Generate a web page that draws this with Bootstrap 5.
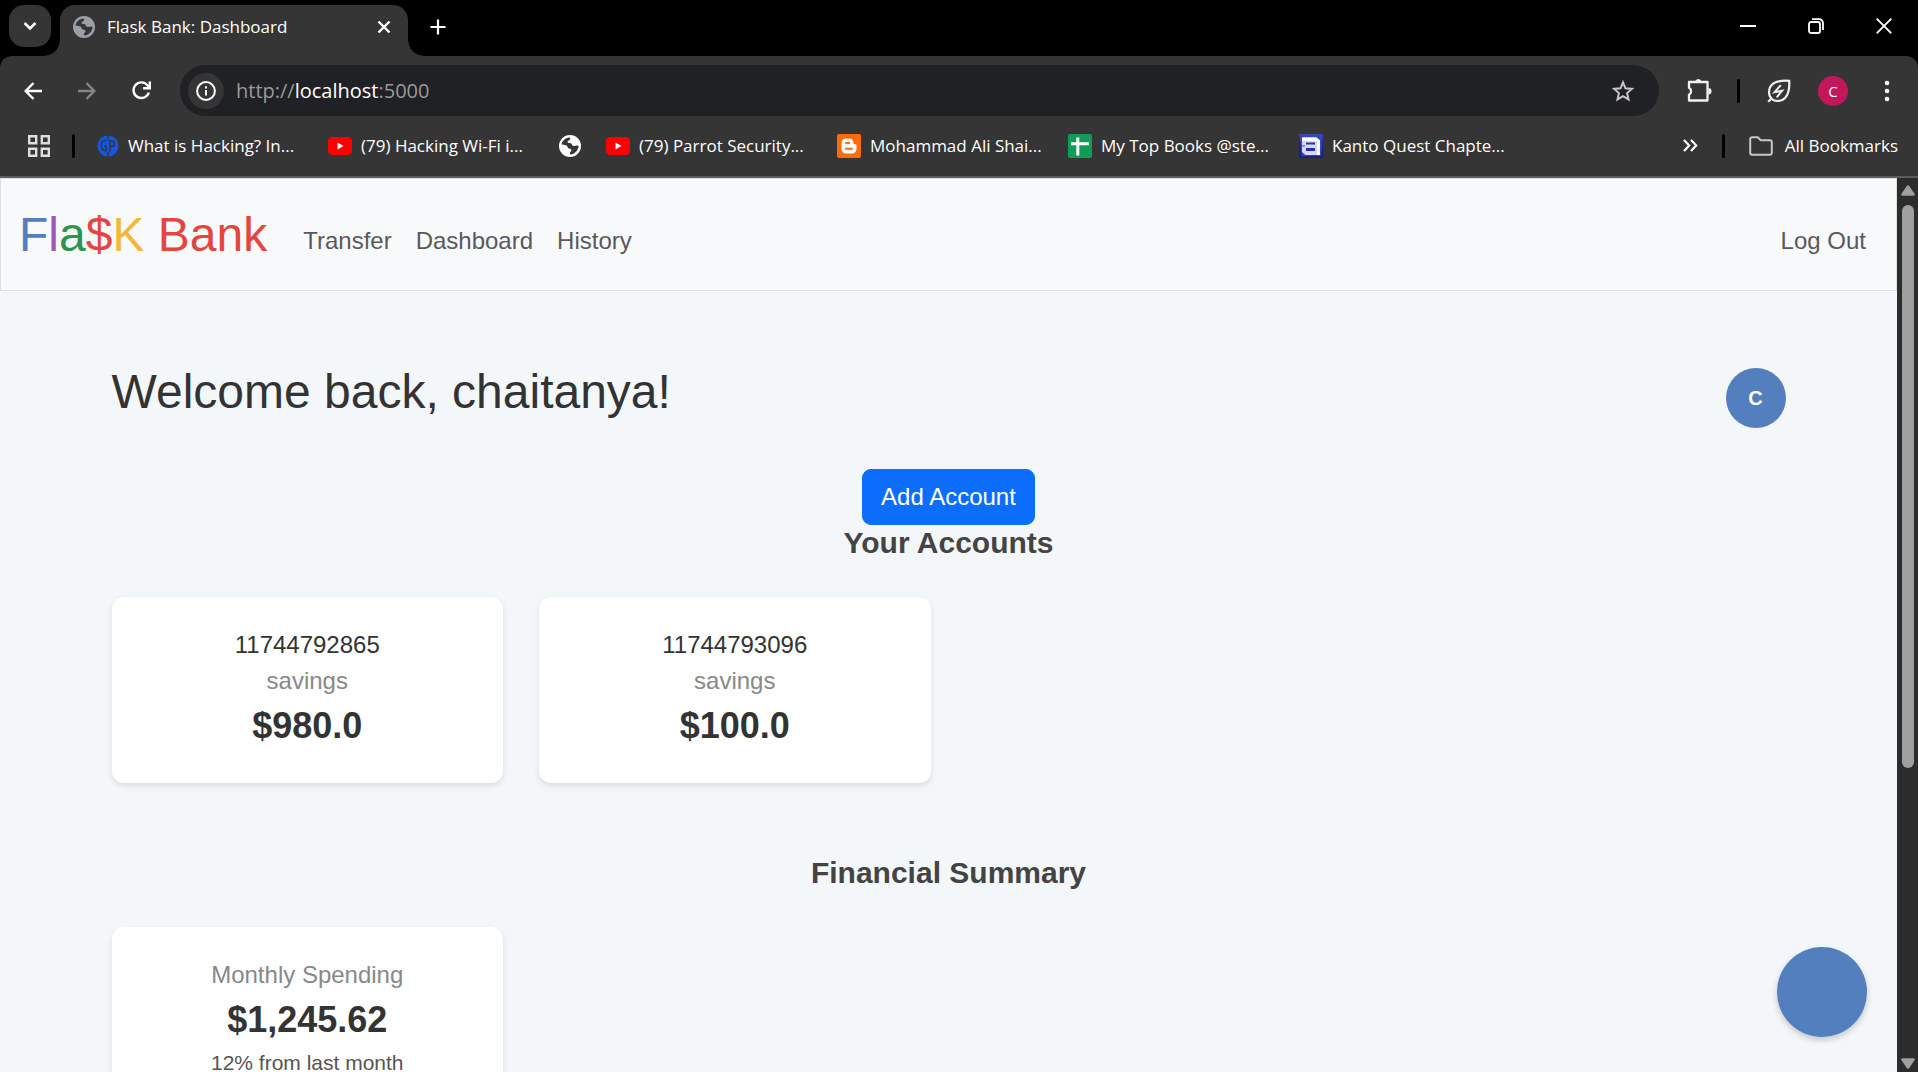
<!DOCTYPE html>
<html lang="en">
<head>
<meta charset="utf-8">
<meta name="viewport" content="width=device-width, initial-scale=1">
<title>Flask Bank: Dashboard</title>
<link href="https://cdn.jsdelivr.net/npm/bootstrap@5.3.0/dist/css/bootstrap.min.css" rel="stylesheet">
<style>
  html { font-size: 24px; }
  body { font-family: "Liberation Sans", Arial, sans-serif; color: #333; background: #000; }

  /* browser frame */
  .frame-ui { font-family: "Open Sans", "Noto Sans", sans-serif; font-size: 17px; line-height: 24px; color: #fff; background: #000; }
  .frame-ui button, .frame-ui a { color: inherit; font: inherit; background: none; border: 0; padding: 0; text-decoration: none; }
  .frame-ui svg, .frame-ui button { display: flex; flex: none; align-items: center; justify-content: center; }
  .tab-strip { height: 56px; background: #000; padding-left: 9px; }
  .tab-strip .tab-search { width: 42px; height: 42px; margin: 5px 9px 0 0; border-radius: 15px; background: #353535; }
  .open-tab { position: relative; align-self: flex-end; width: 348px; height: 51px; padding: 0 17px 8px 13px; border-radius: 15px 15px 0 0; background: #353535; }
  .open-tab::before, .open-tab::after { content: ""; position: absolute; bottom: 0; width: 15px; height: 15px; }
  .open-tab::before { left: -15px; background: radial-gradient(circle at 0 0, transparent 14px, #353535 15px); }
  .open-tab::after { right: -15px; background: radial-gradient(circle at 100% 0, transparent 14px, #353535 15px); }
  .tab-strip .strip-btn { width: 60px; height: 42px; }
  .tab-strip .window-btn { width: 68px; height: 51px; }
  .tool-row { height: 69px; padding: 0 4px 0 6px; border-radius: 12px 12px 0 0; background: #353535; }
  .tool-row .tool-btn { width: 54px; height: 51px; }
  .address-pill { height: 51px; margin: 0 13px 0 12px; padding: 0 18px 0 8px; border-radius: 26px; background: #202124; font-size: 20px; }
  .address-pill .site-info { width: 36px; height: 36px; margin-right: 12px; border-radius: 50%; background: #353535; }
  .address-pill .dim { color: #999; }
  .bar-split { width: 3px; height: 24px; border-radius: 2px; background: #000; flex: none; }
  .tool-row .bar-split { margin: 0 12px 0 11px; }
  .mark-row .bar-split { margin: 0 22px; }
  .mark-row .bar-split-end { margin: 0 24px; }
  .profile-dot { width: 30px; height: 30px; border-radius: 50%; background: #c2185b; font-size: 15px; }
  .mark-row { height: 53px; padding: 0 20px 10px 28px; border-bottom: 2px solid #5c5c5c; background: #353535; }
  .mark-row .mark-link { display: flex; align-items: center; gap: 9px; width: 231px; white-space: nowrap; }
  .mark-row .mark-solo { width: 47px; }

  /* page */
  .page-view { background: #f3f7fa; min-height: 0; }
  .bank-nav { background: #f8f9fa; border: 1px solid #dde1e6; }
  .bank-nav .navbar-brand { font-size: 48px; color: #e34640; }
  .bank-nav .nav-link { color: #58595b; }
  .c-blue { color: #537fbe; } .c-purple { color: #9d5ab5; } .c-green { color: #2e934c; } .c-red { color: #e34640; } .c-yellow { color: #f4b73b; }
  .dash { max-width: 1710px; padding-top: 72px; }
  .dash h1 { font-size: 48px; font-weight: 400; margin-bottom: 12px; }
  .dash h2 { font-size: 30px; font-weight: 700; color: #444; margin-bottom: 36px; }
  .user-dot { width: 60px; height: 60px; border-radius: 50%; background: #537fbe; font-size: 20px; }
  .tiles { display: grid; grid-template-columns: repeat(4, 1fr); gap: 36px; margin-bottom: 72px; }
  .tile { background: #fff; border-radius: 12px; padding: 30px; text-align: center; box-shadow: 0 3px 6px rgba(0,0,0,.1); }
  .tile p { margin: 0; }
  .tile .soft { color: #888; }
  .tile .amount { font-size: 36px; font-weight: 700; }
  .tile .note { font-size: 21px; color: #555; }
  .chat-fab { position: absolute; right: 30px; bottom: 35px; width: 90px; height: 90px; border: 0; border-radius: 50%; background: #537fbe; box-shadow: 0 3px 6px rgba(0,0,0,.2); }
  .scroll-rail { width: 21px; padding: 7px 0 3px; background: #2c2c2c; }
  .scroll-lane { padding-top: 9px; }
  .scroll-grip { width: 12px; height: 66%; border-radius: 6px; background: #9f9f9f; }
</style>
<script src="https://cdn.jsdelivr.net/npm/bootstrap@5.3.0/dist/js/bootstrap.bundle.min.js"></script>
</head>
<body class="d-flex flex-column vh-100 overflow-hidden">

<svg width="0" height="0" class="d-none" aria-hidden="true">
  <symbol id="globe" viewBox="0 0 22 22">
    <circle cx="11" cy="11" r="11" fill="currentColor"/>
    <path d="M2.500 9.500C3.200 5.500 6.500 2.700 10.500 2.400c1.200.6 1 2-.4 2.800-1.300.7-2 1.400-1.300 2.300.8.8 2 .2 3 .7 1.300.7.900 2 2.200 2.600 1.400.6 2.600-.2 3.900-.2 1 .1 1.600.4 1.700.7-.5 4.300-3.800 7.800-8.100 8.300-1.300-1-.6-2.300.4-3 .8-.7.8-1.700 0-2.300-.9-.7-2-.4-2.900-1.200-.6-.6-.3-1.600-1.100-2.300C6.400 9.800 4.300 10.300 2.500 9.500z" fill="#353535"/>
  </symbol>
  <symbol id="youtube" viewBox="0 0 24 24">
    <rect y="3" width="24" height="18" rx="4.500" fill="#f00"/><path d="M9.500 8.500v7l6-3.500z" fill="#fff"/>
  </symbol>
</svg>

<header class="frame-ui flex-shrink-0">
  <div class="tab-strip d-flex">
    <button class="tab-search" aria-label="Search tabs"><svg width="14" height="10" viewBox="0 0 14 10" fill="none" stroke="#fff" stroke-width="2.500"><path d="M1.500 2L7 7.500 12.500 2"/></svg></button>
    <div class="open-tab d-flex align-items-center">
      <svg width="22" height="22" color="#9aa0a6"><use href="#globe"/></svg>
      <span class="flex-grow-1 ms-2">Flask Bank: Dashboard</span>
      <button aria-label="Close tab"><svg width="14" height="14" viewBox="0 0 14 14" stroke="#fff" stroke-width="2.400"><path d="M1.500 1.500l11 11M12.500 1.500l-11 11"/></svg></button>
    </div>
    <button class="strip-btn mt-1" aria-label="New tab"><svg width="16" height="16" viewBox="0 0 16 16" stroke="#fff" stroke-width="2.200"><path d="M8 .5v15M.5 8h15"/></svg></button>
    <div class="d-flex ms-auto">
      <button class="window-btn" aria-label="Minimize"><svg width="16" height="16" viewBox="0 0 16 16" stroke="#fff" stroke-width="2"><path d="M0 8h16"/></svg></button>
      <button class="window-btn" aria-label="Restore"><svg width="16" height="16" viewBox="0 0 16 16" fill="none" stroke="#fff" stroke-width="1.800"><rect x="1" y="4" width="11" height="11" rx="2"/><path d="M4 1.200h7a4 4 0 0 1 4 4V12"/></svg></button>
      <button class="window-btn" aria-label="Close"><svg width="16" height="16" viewBox="0 0 16 16" stroke="#fff" stroke-width="1.800"><path d="M.7.7l14.600 14.600M15.300.7L.7 15.300"/></svg></button>
    </div>
  </div>

  <div class="tool-row d-flex align-items-center">
    <button class="tool-btn" aria-label="Back"><svg width="18" height="18" viewBox="0 0 18 18" fill="none" stroke="#fff" stroke-width="2.400"><path d="M9.500 1L1.700 9l7.800 8M1.700 9H18"/></svg></button>
    <button class="tool-btn" aria-label="Forward"><svg width="18" height="18" viewBox="0 0 18 18" fill="none" stroke="#858585" stroke-width="2.400"><path d="M8.500 1l7.800 8-7.800 8M16.300 9H0"/></svg></button>
    <button class="tool-btn" aria-label="Reload"><svg width="19" height="19" viewBox="0 0 19 19" fill="none" stroke="#fff" stroke-width="2.400"><path d="M16.800 11.500A7.800 7.800 0 1 1 15.400 4.300L17 6"/><path d="M17.800.5v6.700h-6.700"/></svg></button>
    <div class="address-pill d-flex align-items-center flex-grow-1">
      <button class="site-info" aria-label="Site information"><svg width="20" height="20" viewBox="0 0 20 20" fill="none" stroke="#fff" stroke-width="2"><circle cx="10" cy="10" r="8.900"/><path d="M10 9v5.500M10 5.200v2.200"/></svg></button>
      <div class="flex-grow-1" role="textbox" aria-label="Address" contenteditable="true" spellcheck="false"><span class="dim">http://</span>localhost<span class="dim">:5000</span></div>
      <button class="px-1" aria-label="Bookmark this page"><svg width="24" height="24" viewBox="0 0 24 24" fill="none" stroke="#c7c7c7" stroke-width="2"><path d="M12 3.400l2.500 5.900 6.400.6-4.800 4.200 1.400 6.300-5.500-3.300-5.500 3.300 1.400-6.300-4.800-4.200 6.400-.6z"/></svg></button>
    </div>
    <button class="tool-btn" aria-label="Extensions"><svg width="26" height="26" viewBox="0 0 26 26"><path d="M3 4h18.500v18.500H3v-5.800a4 4 0 0 0 0-7z" fill="none" stroke="#f1f1f1" stroke-width="2.300" stroke-linejoin="round"/><path d="M9 3.500a3.400 3.400 0 0 1 6.600 0zM22.300 10a3.200 3.200 0 0 1 0 6.400z" fill="#f1f1f1"/></svg></button>
    <span class="bar-split"></span>
    <button class="tool-btn" aria-label="Energy saver"><svg width="24" height="24" viewBox="0 0 24 24" fill="none" stroke="#f1f1f1" stroke-width="2.200"><path d="M22.200 1.800C13 1 2 3 2 13c0 6 4 9 8.500 9C19 22 23 14 22.200 1.800zM1.200 22.800L5 19"/><path d="M13.800 6.200L7.500 13.300l7.600-1.500-5.400 6.500" stroke-width="2"/></svg></button>
    <button class="tool-btn" aria-label="Profile"><span class="profile-dot d-flex align-items-center justify-content-center">C</span></button>
    <button class="tool-btn" aria-label="Menu"><svg width="6" height="22" viewBox="0 0 6 22" fill="#fff"><circle cx="3" cy="3" r="2.300"/><circle cx="3" cy="11" r="2.300"/><circle cx="3" cy="19" r="2.300"/></svg></button>
  </div>

  <nav class="mark-row d-flex align-items-center" aria-label="Bookmarks">
    <button aria-label="Tab groups"><svg width="22" height="22" viewBox="0 0 22 22" fill="none" stroke="#dedede" stroke-width="2.400"><path d="M1.200 1.200h7v7h-7zM13.800 1.200h7v7h-7zM1.200 13.800h7v7h-7zM13.800 13.800h7v7h-7z"/></svg></button>
    <span class="bar-split"></span>
    <a class="mark-link" href="#"><svg width="22" height="22" viewBox="0 0 22 22"><circle cx="11" cy="11" r="10.500" fill="#1456e0"/><path d="M11 0v5M11 17v5M9 5.500C5.500 5 4 8 4.200 11c.2 3 2 5 4.800 4.800V11H7M13 16.500V5.800c3 0 4.500 1.700 4.500 3.200S16 11.500 13.500 11.500" stroke="#353535" stroke-width="1.400" fill="none"/></svg>What is Hacking? In...</a>
    <a class="mark-link" href="#"><svg width="24" height="24"><use href="#youtube"/></svg>(79) Hacking Wi-Fi i...</a>
    <a class="mark-link mark-solo" href="#" aria-label="Saved page"><svg width="22" height="22"><use href="#globe"/></svg></a>
    <a class="mark-link" href="#"><svg width="24" height="24"><use href="#youtube"/></svg>(79) Parrot Security...</a>
    <a class="mark-link" href="#"><svg width="24" height="24" viewBox="0 0 24 24"><rect width="24" height="24" rx="2" fill="#ff6a0a"/><path d="M4.500 9a4.500 4.500 0 0 1 4.500-4.500h3.200A4.300 4.300 0 0 1 16.500 8.800c0 1 .5 1.200 1.500 1.300 1 .1 1.500.6 1.500 1.500V15a4.500 4.500 0 0 1-4.500 4.500H9A4.500 4.500 0 0 1 4.500 15z" fill="#fff"/><path d="M9 9h3.300M9 14.700h6" stroke="#ff6a0a" stroke-width="2" stroke-linecap="round"/></svg>Mohammad Ali Shai...</a>
    <a class="mark-link" href="#"><svg width="24" height="24" viewBox="0 0 24 24"><rect width="24" height="24" rx="2" fill="#109d58"/><path d="M9.800 3.500v18M3 9.800h18" stroke="#fff" stroke-width="3"/></svg>My Top Books @ste...</a>
    <a class="mark-link" href="#"><svg width="24" height="24" viewBox="0 0 24 24"><path d="M0 0h24v24H0z" fill="#18208a"/><path d="M0 0h24l-2 22H3z" fill="#3547b8"/><path d="M3 3.500h14.500l3.500 3V21H6.500L3 18v-5.500h3v-1H3z" fill="#d3d9f5"/><path d="M3 3.500h14.500l3.500 3V21h-3V7H3z" fill="#fff"/><path d="M7 8.500h9v2H7zM7 14h9v3H7z" fill="#2534a3"/></svg>Kanto Quest Chapte...</a>
    <button class="ms-auto" aria-label="More bookmarks"><svg width="15" height="13" viewBox="0 0 15 13" fill="none" stroke="#fff" stroke-width="2.200"><path d="M1 1l5.200 5.500L1 12M8 1l5.200 5.500L8 12"/></svg></button>
    <span class="bar-split bar-split-end"></span>
    <a class="d-flex align-items-center" href="#"><svg class="me-2" width="24" height="20" viewBox="0 0 24 20" fill="none" stroke="#c7c7c7" stroke-width="2"><path d="M1.200 3.200a2 2 0 0 1 2-2h5.500l3 3h9.100a2 2 0 0 1 2 2v10.600a2 2 0 0 1-2 2H3.200a2 2 0 0 1-2-2z"/></svg>All Bookmarks</a>
  </nav>
</header>

<div class="d-flex flex-grow-1 overflow-hidden">
  <div class="page-view position-relative flex-grow-1 overflow-hidden">
    <nav class="navbar navbar-expand-md bank-nav">
      <div class="container-fluid">
        <a class="navbar-brand" href="#"><span class="c-blue">F</span><span class="c-purple">l</span><span class="c-green">a</span><span class="c-red">$</span><span class="c-yellow">K</span> <span class="c-red">Bank</span></a>
        <div class="collapse navbar-collapse">
          <ul class="navbar-nav me-auto mt-2">
            <li class="nav-item"><a class="nav-link" href="#">Transfer</a></li>
            <li class="nav-item"><a class="nav-link" href="#">Dashboard</a></li>
            <li class="nav-item"><a class="nav-link" href="#">History</a></li>
          </ul>
          <ul class="navbar-nav ms-auto mt-2">
            <li class="nav-item"><a class="nav-link" href="#">Log Out</a></li>
          </ul>
        </div>
      </div>
    </nav>

    <main class="container dash">
      <div class="d-flex justify-content-between align-items-center mb-4">
        <h1>Welcome back, chaitanya!</h1>
        <div class="user-dot d-flex align-items-center justify-content-center fw-bold text-white">C</div>
      </div>
      <div class="d-flex justify-content-center">
        <button class="btn btn-primary">Add Account</button>
      </div>
      <section>
        <h2 class="text-center">Your Accounts</h2>
        <div class="tiles">
          <div class="tile"><p>11744792865</p><p class="soft">savings</p><p class="amount">$980.0</p></div>
          <div class="tile"><p>11744793096</p><p class="soft">savings</p><p class="amount">$100.0</p></div>
        </div>
      </section>
      <section>
        <h2 class="text-center">Financial Summary</h2>
        <div class="tiles">
          <div class="tile"><p class="soft">Monthly Spending</p><p class="amount">$1,245.62</p><p class="note">12% from last month</p></div>
        </div>
      </section>
    </main>
    <button class="chat-fab" aria-label="Open chat"></button>
  </div>

  <div class="scroll-rail d-flex flex-column align-items-center flex-shrink-0" aria-hidden="true">
    <svg class="flex-shrink-0" width="14" height="11" viewBox="0 0 14 11"><path d="M7 1.500L12.500 9.500h-11z" fill="#9f9f9f" stroke="#9f9f9f" stroke-width="2.500" stroke-linejoin="round"/></svg>
    <div class="scroll-lane flex-grow-1"><div class="scroll-grip"></div></div>
    <svg class="flex-shrink-0" width="14" height="11" viewBox="0 0 14 11"><path d="M7 9.500L1.500 1.500h11z" fill="#9f9f9f" stroke="#9f9f9f" stroke-width="2.500" stroke-linejoin="round"/></svg>
  </div>
</div>
</body>
</html>
